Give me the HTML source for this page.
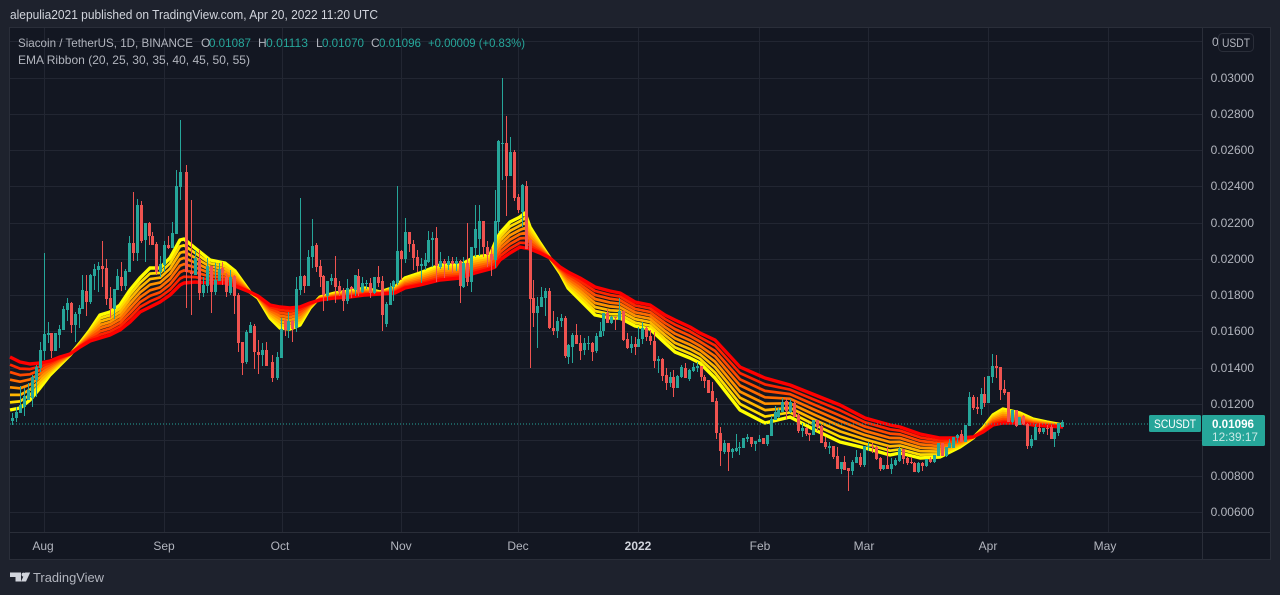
<!DOCTYPE html>
<html lang="en">
<head>
<meta charset="utf-8">
<title>SCUSDT chart</title>
<style>
html,body{margin:0;padding:0;background:#1e222d;width:1280px;height:595px;overflow:hidden}
svg{display:block;position:absolute;left:0;top:0}
text{font-family:"Liberation Sans",sans-serif;font-size:12px;fill:#b2b5be}
.g{fill:#26a69a}
.a{text-anchor:end}
.t{text-anchor:middle}
</style>
</head>
<body>
<svg id="s" xmlns="http://www.w3.org/2000/svg" width="1280" height="595" viewBox="0 0 1280 595">
<rect x="0" y="0" width="1280" height="595" fill="#1e222d"/>
<rect x="9.5" y="27.5" width="1261" height="532" fill="#131722" stroke="#2a2e39"/>
<path stroke="#222632" fill="none" d="M10 41.5H1202M10 78.5H1202M10 114.5H1202M10 150.5H1202M10 186.5H1202M10 223.5H1202M10 259.5H1202M10 295.5H1202M10 331.5H1202M10 368.5H1202M10 404.5H1202M10 440.5H1202M10 476.5H1202M10 512.5H1202M44.5 28V532M164.5 28V532M282.5 28V532M401.5 28V532M518.5 28V532M638.5 28V532M759.5 28V532M868.5 28V532M988.5 28V532M1108.5 28V532"/>
<path stroke="#2a2e39" fill="none" d="M1202.5 28V559M10 532.5H1270"/>
<g id="ribbon" fill="none" stroke-linejoin="round" stroke-linecap="butt"></g>
<path d="M10 424H1149" stroke="#26a69a" stroke-dasharray="1 2" stroke-width="1" fill="none"/>
<g id="candles"></g>

<text x="10" y="19" font-size="13" style="font-size:13px;fill:#d1d4dc" textLength="368" lengthAdjust="spacingAndGlyphs">alepulia2021 published on TradingView.com, Apr 20, 2022 11:20 UTC</text>

<text x="18" y="47" textLength="175" lengthAdjust="spacingAndGlyphs">Siacoin / TetherUS, 1D, BINANCE</text>
<text x="201" y="47">O</text><text x="209" y="47" class="g" textLength="42" lengthAdjust="spacingAndGlyphs">0.01087</text>
<text x="258" y="47">H</text><text x="266" y="47" class="g" textLength="42" lengthAdjust="spacingAndGlyphs">0.01113</text>
<text x="316" y="47">L</text><text x="322" y="47" class="g" textLength="42" lengthAdjust="spacingAndGlyphs">0.01070</text>
<text x="371" y="47">C</text><text x="379" y="47" class="g" textLength="42" lengthAdjust="spacingAndGlyphs">0.01096</text>
<text x="428" y="47" class="g" textLength="97" lengthAdjust="spacingAndGlyphs">+0.00009 (+0.83%)</text>
<text x="18" y="64" textLength="232" lengthAdjust="spacingAndGlyphs">EMA Ribbon (20, 25, 30, 35, 40, 45, 50, 55)</text>

<text x="1212" y="46">0</text>
<rect x="1218.5" y="33.5" width="35" height="18" rx="4" fill="#131722" stroke="#2a2e39"/>
<text x="1222" y="47" textLength="28" lengthAdjust="spacingAndGlyphs">USDT</text>
<g>
<text x="1254" y="82" class="a">0.03000</text>
<text x="1254" y="118" class="a">0.02800</text>
<text x="1254" y="154" class="a">0.02600</text>
<text x="1254" y="190" class="a">0.02400</text>
<text x="1254" y="227" class="a">0.02200</text>
<text x="1254" y="263" class="a">0.02000</text>
<text x="1254" y="299" class="a">0.01800</text>
<text x="1254" y="335" class="a">0.01600</text>
<text x="1254" y="372" class="a">0.01400</text>
<text x="1254" y="408" class="a">0.01200</text>
<text x="1254" y="480" class="a">0.00800</text>
<text x="1254" y="516" class="a">0.00600</text>
</g>
<rect x="1149" y="415" width="52" height="17" rx="1.5" fill="#26a69a"/>
<rect x="1202" y="415" width="63" height="31" rx="1.5" fill="#26a69a"/>
<text x="1154" y="428" style="fill:#fff;font-weight:400" textLength="42" lengthAdjust="spacingAndGlyphs">SCUSDT</text>
<text x="1212" y="428" style="fill:#fff;font-weight:700" textLength="42" lengthAdjust="spacingAndGlyphs">0.01096</text>
<text x="1212" y="441" style="fill:#c9e9e6" textLength="46" lengthAdjust="spacingAndGlyphs">12:39:17</text>

<g>
<text x="43" y="550" class="t">Aug</text>
<text x="164" y="550" class="t">Sep</text>
<text x="280" y="550" class="t">Oct</text>
<text x="401" y="550" class="t">Nov</text>
<text x="518" y="550" class="t">Dec</text>
<text x="638" y="550" class="t" style="fill:#d1d4dc;font-weight:700">2022</text>
<text x="760" y="550" class="t">Feb</text>
<text x="864" y="550" class="t">Mar</text>
<text x="988" y="550" class="t">Apr</text>
<text x="1105" y="550" class="t">May</text>
</g>

<path fill="#d1d4dc" d="M10 572.5H21V581.5H15.5V577H10Z"/>
<circle cx="23.6" cy="574.6" r="2" fill="#d1d4dc"/>
<path fill="#d1d4dc" d="M25.2 572.5H30.2L26 581.5H21Z"/>
<text x="33" y="582" style="font-size:13px;fill:#b2b5be" textLength="71" lengthAdjust="spacingAndGlyphs">TradingView</text>
</svg>
<script>
var Y=[[10,410],[20,408],[30,400],[40,388],[50,375],[60,365],[70,355],[80,343],[90,330],[100,315],[110,312],[120,305],[130,290],[140,278],[150,268],[160,268],[170,258],[180,240],[184,239],[195,248],[210,260],[225,263],[235,271],[250,292],[258,298],[270,318],[280,328],[290,329],[300,325],[310,308],[320,297],[335,293],[350,291],[365,288],[380,292],[395,287],[405,278],[420,273],[440,265],[460,265],[475,257],[490,255],[495,243],[500,233],[510,222],[520,217],[525,213],[530,227],[540,243],[550,258],[560,273],[568,288],[580,300],[595,315],[610,318],[620,318],[635,326],[650,329],[665,343],[675,352],[690,358],[700,363],[715,378],[740,410],[765,423],[790,417],[815,430],[840,442],[865,448],[890,455],[900,453],[920,458],[940,457],[960,447],[973,438],[983,428],[993,415],[1003,409],[1020,413],[1033,419],[1047,422],[1063,425]];
var R=[[10,357],[20,362],[30,364],[40,363],[50,361],[60,357],[70,354],[80,347],[90,341],[100,338],[110,335],[120,330],[130,322],[140,312],[150,307],[160,302],[170,295],[180,285],[184,283],[195,282],[210,283],[225,283],[235,286],[250,292],[258,296],[270,305],[280,307],[290,308],[300,307],[310,303],[320,300],[335,298],[350,297],[365,295],[380,294],[395,293],[405,288],[420,285],[440,280],[460,278],[475,273],[490,269],[495,267],[500,260],[510,253],[520,247],[525,248],[530,249],[540,253],[550,258],[560,267],[568,272],[580,278],[595,287],[610,291],[620,293],[635,302],[650,305],[665,315],[675,320],[690,327],[700,333],[715,340],[740,367],[765,378],[790,385],[815,395],[840,405],[865,418],[890,425],[900,427],[920,434],[940,438],[960,438],[973,437],[983,432],[993,425],[1003,423],[1020,423],[1033,425],[1047,426],[1063,427]];
var cols=['#ffff00','#ffdb00','#ffb600','#ff9200','#ff6d00','#ff4900','#ff2400','#ff0000'];
var rb=document.getElementById('ribbon'),h='';
for(var k=0;k<8;k++){var p=[];for(var i=0;i<Y.length;i++){p.push(Y[i][0]+','+(Y[i][1]+(R[i][1]-Y[i][1])*k/7).toFixed(1));}
h+='<polyline stroke-width="'+((k==0||k==7)?3.4:2.7)+'" stroke="'+cols[k]+'" points="'+p.join(' ')+'"></polyline>';}
rb.innerHTML=h;
var C=[
[12,413,418,421,425,1],[16,407,412,418,422,1],[20,386,405,413,413,1],[24,388,396,407,416,1],[28,383,390,400,400,1],[32,375,377,398,407,1],[36,365,367,380,397,1],[40,342,350,368,372,1],[44,253,334,351,360,1],[48,322,333,335,343,1],[51,333,333,351,358,0],[55,333,333,351,351,1],[59,325,329,335,348,1],[63,306,309,330,330,1],[67,298,303,310,321,1],[71,302,303,325,333,0],[75,312,314,325,342,1],[79,305,308,314,328,1],[82,275,290,309,309,1],[86,275,291,302,316,0],[90,274,275,302,304,1],[94,264,269,276,290,1],[98,262,266,270,292,1],[102,241,266,269,287,0],[106,259,268,299,305,0],[110,287,298,309,318,0],[114,289,289,309,319,1],[117,269,276,290,290,1],[121,262,277,286,291,0],[125,269,271,286,290,1],[129,236,243,272,272,1],[133,192,243,253,261,0],[137,199,205,253,261,1],[141,201,205,241,243,0],[145,223,223,240,262,1],[149,222,223,236,245,0],[152,232,236,245,245,0],[156,242,244,272,275,0],[160,256,264,272,277,1],[164,241,245,265,272,1],[168,236,245,248,249,0],[172,222,233,248,248,1],[176,170,186,234,234,1],[180,120,172,187,200,1],[186,165,172,272,308,0],[191,200,272,274,315,0],[195,250,258,275,275,1],[199,250,259,293,300,0],[203,277,285,293,297,1],[207,258,266,286,293,1],[211,266,266,292,313,0],[215,263,280,292,295,1],[219,263,269,281,281,1],[222,262,268,273,285,0],[226,273,277,292,297,0],[230,270,277,293,295,1],[234,275,276,296,314,0],[238,293,295,343,352,0],[242,342,342,363,375,0],[246,330,332,362,364,1],[250,322,325,333,333,1],[254,324,326,352,369,0],[258,340,352,355,374,0],[262,343,350,355,366,1],[266,342,350,366,366,0],[272,355,362,378,382,0],[277,352,357,378,380,1],[281,318,329,358,358,1],[285,319,320,330,336,0],[288,312,321,330,338,1],[292,320,321,329,342,0],[296,277,289,328,332,1],[300,198,276,290,295,1],[304,275,276,286,293,0],[308,250,257,286,286,1],[312,219,246,257,268,1],[316,243,245,267,272,0],[320,260,266,277,287,0],[323,275,276,295,311,0],[327,281,281,296,301,1],[331,274,278,281,285,1],[335,256,278,287,303,0],[339,281,286,292,296,0],[343,288,290,301,311,0],[347,279,288,301,304,1],[351,286,287,289,298,0],[355,275,275,290,296,1],[358,269,276,292,296,0],[362,277,283,292,293,1],[366,280,283,284,289,1],[370,278,283,293,298,0],[374,277,277,293,294,1],[378,266,277,283,287,0],[382,276,281,315,331,0],[386,302,304,324,327,1],[390,283,287,305,305,1],[393,280,281,287,301,1],[397,186,251,283,285,1],[401,250,251,259,280,0],[405,218,232,259,263,1],[409,232,232,244,252,0],[413,240,244,258,270,0],[417,250,257,266,272,0],[421,258,264,266,283,1],[425,253,260,266,270,1],[428,231,240,262,263,1],[432,232,238,240,267,1],[436,227,238,266,282,0],[440,252,261,267,269,1],[444,259,261,264,278,0],[448,256,261,265,270,1],[452,257,261,264,273,0],[456,257,261,264,271,1],[460,260,261,286,303,0],[463,257,263,287,288,1],[467,223,263,282,286,0],[471,247,247,282,292,1],[475,205,229,248,257,1],[479,205,221,239,256,1],[483,221,221,247,257,0],[487,241,247,255,267,0],[491,247,254,260,276,0],[495,190,221,260,268,1],[498,140,141,222,233,1],[502,78,143,144,180,1],[506,116,143,176,216,0],[510,137,152,176,176,1],[514,150,152,198,201,0],[518,194,197,210,213,0],[522,184,185,212,227,1],[526,181,186,249,249,0],[530,240,240,299,368,0],[533,280,298,313,327,0],[537,297,306,313,348,1],[541,287,297,307,307,1],[545,288,291,298,316,1],[549,288,291,328,329,0],[553,311,328,331,335,0],[557,317,321,331,338,1],[561,314,318,321,327,1],[565,316,318,356,358,0],[568,344,345,357,364,1],[572,333,335,347,363,1],[576,324,335,344,344,0],[580,335,343,351,360,0],[584,338,343,350,355,1],[588,336,343,344,350,1],[592,342,343,352,361,0],[596,333,336,351,353,1],[600,322,331,337,337,1],[603,313,313,331,336,1],[607,309,313,323,323,0],[611,316,317,323,324,1],[615,317,317,318,330,0],[619,298,311,320,320,1],[623,311,311,340,341,0],[627,333,339,348,349,0],[631,336,344,348,353,1],[635,337,344,347,355,0],[638,327,339,347,347,1],[642,322,328,339,344,1],[646,326,328,337,341,0],[650,330,336,341,345,0],[654,332,341,361,368,0],[658,356,359,361,373,1],[662,358,359,376,381,0],[666,368,375,383,390,0],[670,372,377,383,387,1],[673,370,377,388,397,0],[677,375,376,388,388,1],[681,365,367,377,378,1],[685,363,368,378,378,0],[689,369,370,379,381,1],[693,363,367,371,372,1],[697,362,366,368,372,1],[701,366,366,377,381,0],[704,375,377,381,388,0],[708,380,380,393,393,0],[712,382,391,402,402,0],[716,398,401,433,439,0],[720,427,433,451,466,0],[724,440,443,452,454,1],[728,443,443,452,471,0],[732,448,449,452,458,1],[736,434,448,451,452,1],[739,442,447,448,455,1],[743,438,438,448,448,1],[747,434,437,439,442,1],[751,437,437,444,447,0],[755,441,441,444,451,1],[759,435,439,442,442,1],[763,438,438,444,444,0],[767,435,435,444,446,1],[771,416,419,436,436,1],[775,406,412,420,420,1],[778,408,410,417,418,1],[782,398,402,412,412,1],[786,398,401,411,419,0],[790,399,402,412,413,1],[794,401,403,417,417,0],[798,413,415,431,433,0],[802,423,428,431,437,1],[806,427,428,434,436,0],[809,433,433,435,441,0],[813,420,420,435,435,1],[817,420,420,427,431,0],[821,425,426,443,443,0],[825,437,442,447,449,0],[829,442,446,448,454,1],[833,446,446,457,459,0],[837,447,456,469,469,0],[841,462,462,469,474,1],[844,456,462,470,470,0],[848,468,468,471,491,0],[852,460,462,471,475,1],[856,450,457,463,463,1],[860,453,457,465,467,0],[864,446,446,465,467,1],[868,442,446,447,451,1],[872,443,446,447,453,0],[876,446,447,459,460,0],[880,457,458,469,471,0],[883,465,465,469,470,1],[887,446,465,469,469,0],[891,458,464,469,474,1],[895,458,460,465,466,1],[899,447,449,461,462,1],[903,449,449,459,464,0],[907,457,458,463,465,0],[911,457,462,463,464,0],[914,462,463,472,472,0],[918,462,463,472,473,1],[922,462,463,466,471,0],[926,459,459,466,467,1],[930,457,459,462,463,0],[934,455,455,462,463,1],[938,443,443,456,456,1],[942,443,443,456,456,0],[946,447,447,456,457,1],[949,439,443,448,448,1],[953,437,437,448,448,1],[957,434,435,438,443,1],[961,430,434,442,442,0],[965,425,425,442,442,1],[969,392,397,426,426,1],[973,395,397,408,410,0],[977,397,407,409,414,0],[981,388,394,409,415,1],[984,377,394,403,407,0],[988,376,376,403,403,1],[992,354,366,377,383,1],[996,355,366,368,378,0],[1000,367,367,390,400,0],[1004,380,389,393,395,0],[1008,392,392,422,422,0],[1012,410,410,422,423,1],[1016,410,410,426,427,0],[1019,417,417,425,425,1],[1023,415,416,424,425,0],[1027,423,424,446,449,0],[1031,435,439,446,448,1],[1035,424,427,440,440,1],[1039,423,428,432,434,0],[1043,428,428,432,434,1],[1047,425,428,429,435,0],[1051,425,427,439,439,0],[1054,432,432,439,447,1],[1058,423,423,433,436,1],[1062,420,422,427,427,1]];
var paths={1:{w:'',b:''},0:{w:'',b:''}};
C.forEach(function(c){var x=c[0],t=paths[c[5]];
t.w+='M'+x+' '+c[1]+'h1V'+c[4]+'h-1z';
t.b+='M'+(x-1)+' '+c[2]+'h3V'+Math.max(c[3],c[2]+1)+'h-3z';});
document.getElementById('candles').innerHTML=
'<path fill="#ef5350" d="'+paths[0].w+paths[0].b+'"></path><path fill="#26a69a" d="'+paths[1].w+paths[1].b+'"></path>';
</script>
</body>
</html>
